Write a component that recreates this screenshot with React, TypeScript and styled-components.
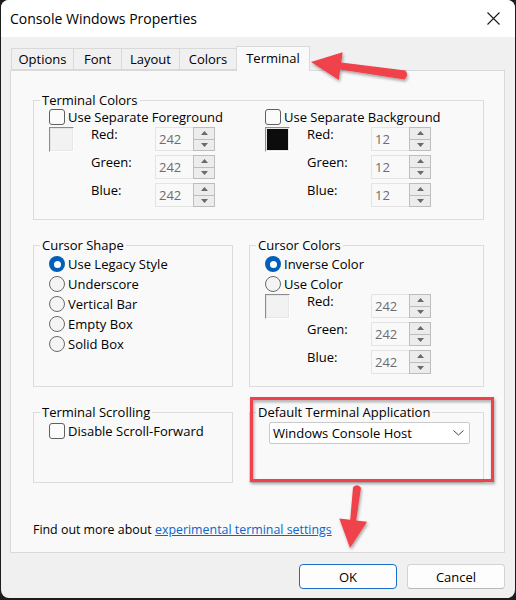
import React from "react";
import styled, { createGlobalStyle } from "styled-components";

const GlobalStyle = createGlobalStyle`
  html, body {
    margin: 0;
    padding: 0;
    background: #1c1c1c;
  }
  body {
    font-family: "Open Sans", "Noto Sans", sans-serif;
    font-size: 13px;
    color: #000;
  }
  * {
    box-sizing: border-box;
  }
`;

const TABS = [
  { label: "Options", width: 63 },
  { label: "Font", width: 49 },
  { label: "Layout", width: 59 },
  { label: "Colors", width: 58 },
  { label: "Terminal", width: 74, active: true },
];

const CURSOR_SHAPES = ["Use Legacy Style", "Underscore", "Vertical Bar", "Empty Box", "Solid Box"];

export default function App() {
  return (
    <Screen>
      <GlobalStyle />
      <Window>
        <TitleBar>
          <span>Console Windows Properties</span>
          <CloseIcon />
        </TitleBar>
        <Body>
          <TabRow>
            {TABS.map((t) => (
              <Tab key={t.label} $active={!!t.active} $w={t.width}>
                {t.label}
              </Tab>
            ))}
          </TabRow>
          <Panel>
            <Group>
              <Legend>Terminal Colors</Legend>
              <SplitRow>
                <Half $w={216}>
                  <CheckRow>
                    <CheckBox />
                    Use Separate Foreground
                  </CheckRow>
                  <ColorPicker swatch="#f2f2f2" value="242" />
                </Half>
                <Half>
                  <CheckRow>
                    <CheckBox />
                    Use Separate Background
                  </CheckRow>
                  <ColorPicker swatch="#0c0c0c" value="12" />
                </Half>
              </SplitRow>
            </Group>

            <TwoCols>
              <Group>
                <Legend>Cursor Shape</Legend>
                {CURSOR_SHAPES.map((s, i) => (
                  <RadioRow key={s}>
                    <Radio $checked={i === 0} />
                    {s}
                  </RadioRow>
                ))}
              </Group>
              <Group>
                <Legend>Cursor Colors</Legend>
                <RadioRow>
                  <Radio $checked />
                  Inverse Color
                </RadioRow>
                <RadioRow>
                  <Radio />
                  Use Color
                </RadioRow>
                <ColorPicker swatch="#f2f2f2" value="242" />
              </Group>
            </TwoCols>

            <TwoCols $h={79}>
              <Group>
                <Legend>Terminal Scrolling</Legend>
                <CheckRow $top={2}>
                  <CheckBox />
                  Disable Scroll-Forward
                </CheckRow>
              </Group>
              <Group>
                <Legend>Default Terminal Application</Legend>
                <Select>
                  <span>Windows Console Host</span>
                  <svg width="11" height="6" viewBox="0 0 11 6">
                    <path d="M0.5 0.5 L5.5 5 L10.5 0.5" fill="none" stroke="#444" strokeWidth="1" />
                  </svg>
                </Select>
              </Group>
            </TwoCols>

            <InfoLine>
              Find out more about <Link>experimental terminal settings</Link>
            </InfoLine>
          </Panel>
          <ButtonRow>
            <Button $primary>OK</Button>
            <Button>Cancel</Button>
          </ButtonRow>
        </Body>
      </Window>
      <Annotations />
    </Screen>
  );
}

const ColorPicker = ({ swatch, value }: { swatch: string; value: string }) => (
  <PickerRow>
    <Swatch $color={swatch} />
    <RgbGrid>
      {["Red:", "Green:", "Blue:"].map((l) => (
        <React.Fragment key={l}>
          <RgbLabel>{l}</RgbLabel>
          <Spinner>
            <SpinInput>{value}</SpinInput>
            <SpinButtons>
              <SpinButton>
                <svg width="7" height="4" viewBox="0 0 7 4">
                  <path d="M0 4 L3.5 0 L7 4 Z" fill="#6a6a6a" />
                </svg>
              </SpinButton>
              <SpinButton>
                <svg width="7" height="4" viewBox="0 0 7 4">
                  <path d="M0 0 L3.5 4 L7 0 Z" fill="#6a6a6a" />
                </svg>
              </SpinButton>
            </SpinButtons>
          </Spinner>
        </React.Fragment>
      ))}
    </RgbGrid>
  </PickerRow>
);

const CloseIcon = () => (
  <svg width="13" height="13" viewBox="0 0 13 13">
    <path d="M0.5 0.5 L12.5 12.5 M12.5 0.5 L0.5 12.5" stroke="#1a1a1a" strokeWidth="1.1" />
  </svg>
);

// red callouts drawn over the screenshot
const Annotations = () => (
  <Overlay width="516" height="600" viewBox="0 0 516 600">
    <defs>
      <filter id="shadow" x="-10%" y="-10%" width="130%" height="130%">
        <feDropShadow dx="1" dy="2" stdDeviation="1.5" floodColor="#000" floodOpacity="0.35" />
      </filter>
    </defs>
    <g filter="url(#shadow)" fill="#ef434b">
      <path d="M405.5 70.5 Q409 75 404.5 79.5 L340.2 69.5 L338.8 80 L311 62 L342.6 52.3 L341.3 62.5 Z" />
      <path d="M353 487.3 Q357 483 361 487.7 L356.2 520.5 L367.1 521.8 L350 548 L339.3 518.6 L350.2 519.8 Z" />
      <rect x="251.5" y="398.5" width="241" height="82" fill="none" stroke="#ef434b" strokeWidth="3" />
    </g>
  </Overlay>
);

const Screen = styled.div`
  position: relative;
  width: 516px;
  height: 600px;
  padding-left: 1px;
  background: #1c1c1c;
`;

const Window = styled.div`
  width: 514px;
  height: 598px;
  border-radius: 8px;
  background: #f0f0f0;
  overflow: hidden;
  display: flex;
  flex-direction: column;
`;

const TitleBar = styled.div`
  height: 37px;
  background: #ffffff;
  display: flex;
  align-items: center;
  justify-content: space-between;
  padding: 0 15px 0 9px;
  font-size: 14px;
`;

const Body = styled.div`
  display: flex;
  flex-direction: column;
  padding: 9px 10px 9px 9px;
`;

const TabRow = styled.div`
  display: flex;
  align-items: flex-end;
  height: 24px;
  padding-left: 1px;
  position: relative;
  z-index: 1;
`;

const Tab = styled.div<{ $active: boolean; $w: number }>`
  width: ${(p) => p.$w}px;
  height: ${(p) => (p.$active ? 25 : 22)}px;
  margin-bottom: ${(p) => (p.$active ? -1 : 0)}px;
  margin-left: -1px;
  display: flex;
  align-items: center;
  justify-content: center;
  padding-bottom: ${(p) => (p.$active ? 3 : 0)}px;
  border: 1px solid #d9d9d9;
  border-bottom: ${(p) => (p.$active ? "none" : "1px solid #d9d9d9")};
  background: ${(p) => (p.$active ? "#f9f9f9" : "#f0f0f0")};
  &:first-child {
    margin-left: 0;
  }
`;

const Panel = styled.div`
  height: 483px;
  background: #f9f9f9;
  border: 1px solid #d9d9d9;
  padding: 21px 20px 0 22px;
  display: flex;
  flex-direction: column;
  gap: 17px;
`;

const Group = styled.fieldset`
  margin: 0;
  min-width: 0;
  padding: 1px 14px 12px 15px;
  border: 1px solid #dcdcdc;
`;

const Legend = styled.legend`
  padding: 0 2px;
  margin-left: -9px;
  line-height: 16px;
`;

const SplitRow = styled.div`
  display: flex;
`;

const Half = styled.div<{ $w?: number }>`
  display: flex;
  flex-direction: column;
  gap: 2px;
  ${(p) => (p.$w ? `width: ${p.$w}px;` : "flex: 1;")}
`;

const TwoCols = styled.div<{ $h?: number }>`
  display: grid;
  grid-template-columns: 200px 235px;
  column-gap: 16px;
  ${(p) => (p.$h ? `height: ${p.$h}px;` : "")}
`;

const CheckRow = styled.div<{ $top?: number }>`
  display: flex;
  align-items: center;
  gap: 3px;
  height: 16px;
  margin-top: ${(p) => p.$top ?? 0}px;
  white-space: nowrap;
`;

const CheckBox = styled.span`
  flex: none;
  width: 16px;
  height: 16px;
  border: 1px solid #5f5f5f;
  border-radius: 3px;
  background: #fbfbfb;
`;

const RadioRow = styled.div`
  display: flex;
  align-items: center;
  gap: 3px;
  height: 20px;
  white-space: nowrap;
`;

const Radio = styled.span<{ $checked?: boolean }>`
  flex: none;
  width: 16px;
  height: 16px;
  border-radius: 50%;
  border: ${(p) => (p.$checked ? "none" : "1px solid #6a6a6a")};
  background: ${(p) => (p.$checked ? "#005fb8" : "#f4f4f4")};
  display: flex;
  align-items: center;
  justify-content: center;
  &::after {
    content: "";
    display: ${(p) => (p.$checked ? "block" : "none")};
    width: 7px;
    height: 7px;
    border-radius: 50%;
    background: #fff;
  }
`;

const PickerRow = styled.div`
  display: flex;
  align-items: flex-start;
`;

const Swatch = styled.div<{ $color: string }>`
  width: 25px;
  height: 25px;
  background: ${(p) => p.$color};
  border: 1px solid;
  border-color: #8c8c8c #ffffff #ffffff #8c8c8c;
  outline: 1px solid #e6e6e6;
  outline-offset: -2px;
`;

const RgbGrid = styled.div`
  margin-left: 17px;
  display: grid;
  grid-template-columns: 64px 60px;
  row-gap: 4px;
`;

const RgbLabel = styled.div`
  line-height: 15px;
`;

const Spinner = styled.div`
  display: flex;
  height: 24px;
`;

const SpinInput = styled.div`
  width: 38px;
  height: 24px;
  border: 1px solid #e4e4e4;
  border-right: none;
  padding-left: 3px;
  line-height: 22px;
  font-size: 13px;
  color: #6d6d6d;
  background: #f9f9f9;
`;

const SpinButtons = styled.div`
  width: 22px;
  display: flex;
  flex-direction: column;
  border: 1px solid #bdbdbd;
  background: #bdbdbd;
  gap: 1px;
`;

const SpinButton = styled.div`
  flex: 1;
  display: flex;
  align-items: center;
  justify-content: center;
  background: #ececec;
`;

const Select = styled.div`
  margin: 1px 0 0 4px;
  width: 201px;
  height: 22px;
  background: #ffffff;
  border: 1px solid #cacaca;
  border-radius: 2px;
  display: flex;
  align-items: center;
  justify-content: space-between;
  padding: 0 5px 0 3px;
`;

const InfoLine = styled.div`
  margin-top: 22px;
  line-height: 16px;
  font-size: 12.4px;
  white-space: nowrap;
`;

const Link = styled.span`
  color: #0a66c8;
  text-decoration: underline;
`;

const ButtonRow = styled.div`
  display: flex;
  justify-content: flex-end;
  gap: 10px;
  margin-top: 11px;
`;

const Button = styled.div<{ $primary?: boolean }>`
  width: 98px;
  height: 25px;
  border-radius: 4px;
  background: #fdfdfd;
  border: 1px solid ${(p) => (p.$primary ? "#1a6fc4" : "#d3d3d3")};
  border-bottom-color: ${(p) => (p.$primary ? "#1a6fc4" : "#b8b8b8")};
  display: flex;
  align-items: center;
  justify-content: center;
`;

const Overlay = styled.svg`
  position: absolute;
  left: 0;
  top: 0;
  pointer-events: none;
`;
